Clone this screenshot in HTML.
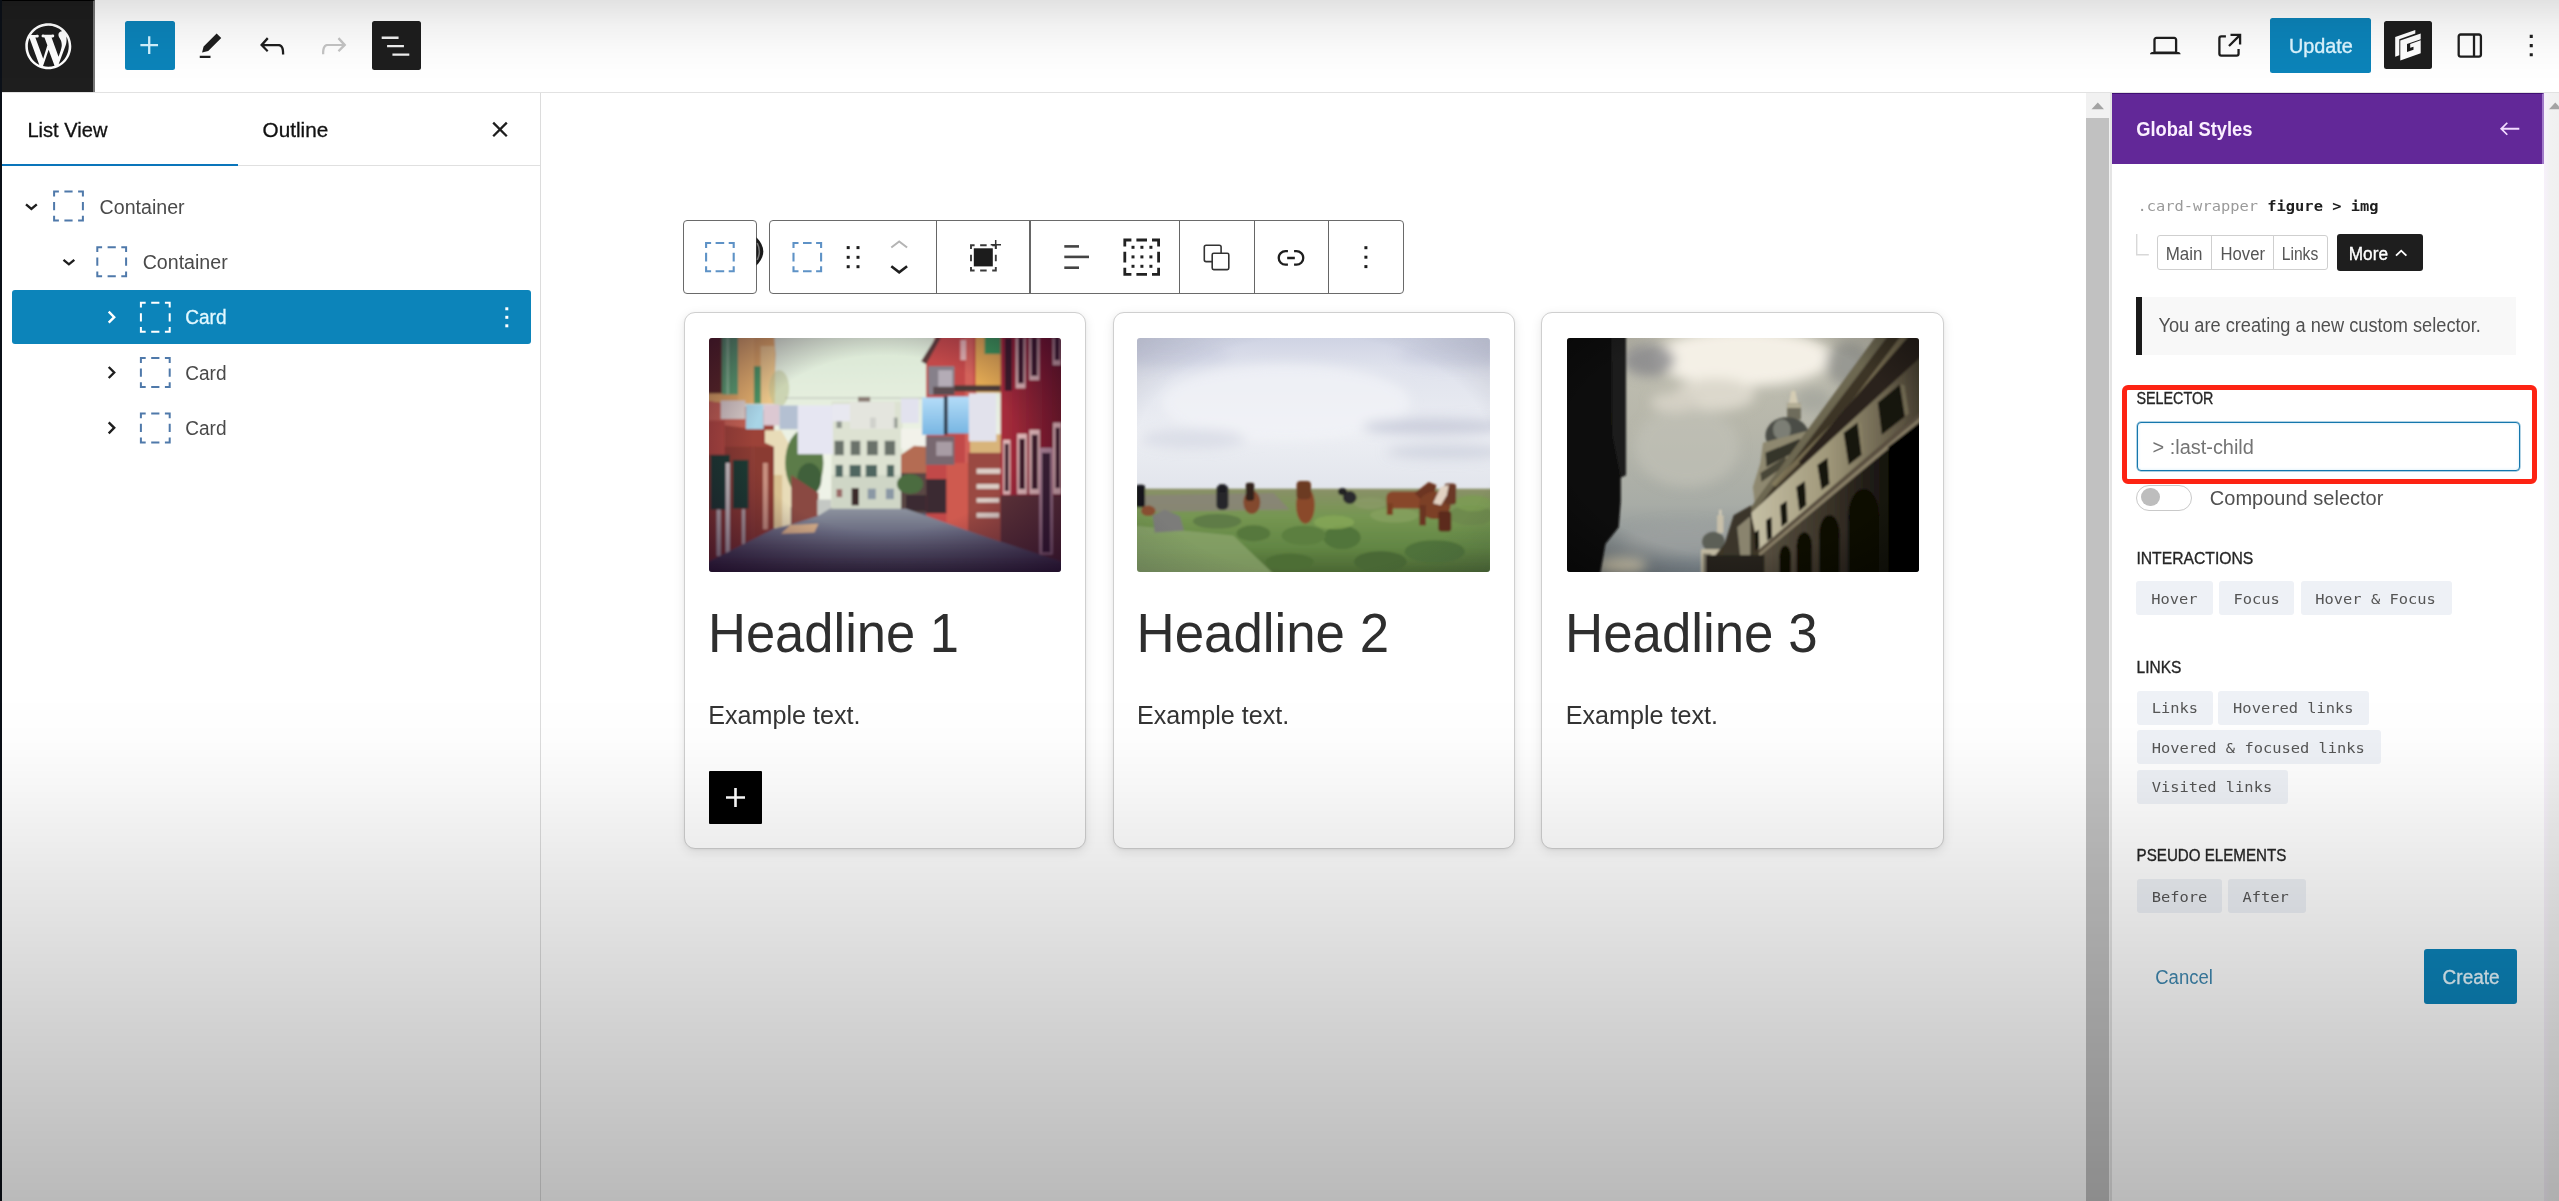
<!DOCTYPE html>
<html lang="en">
<head>
<meta charset="utf-8">
<title>Edit Page — WordPress</title>
<style>
html,body{margin:0;padding:0}
html{width:2559px;height:1201px;overflow:hidden}
body{width:2559px;height:1201px;overflow:hidden;background:#fff;position:relative;font-family:"Liberation Sans",sans-serif;color:#1e1e1e}
.abs,body>*>div,body>*>svg{position:absolute}
#edge{left:0;top:0;width:2px;height:1201px;background:#0b1018;position:absolute}
/* header */
#hdr-bg{left:2px;top:0;width:2557px;height:92px;background:#fff;border-bottom:1px solid #e2e2e2}
#wp{left:2px;top:0;width:91px;height:92px;background:#1e1e1e;border-right:2px solid #777;border-top:1px solid #000;box-sizing:content-box;height:91px}
.btn{border-radius:2.5px}
#add{left:125px;top:21px;width:49.5px;height:49px;background:#0c84ba}
#lv{left:371.5px;top:21px;width:49px;height:48.5px;background:#1e1e1e}
#upd{left:2269.5px;top:18px;width:101.5px;height:54.5px;background:#0c84ba}
#gb{left:2384.3px;top:21px;width:47.7px;height:48.2px;background:#1e1e1e}
/* list view */
#lvp{left:2px;top:93px;width:538px;height:1108px;background:#fff;border-right:1px solid #dcdcdc}
#tabline{left:2px;top:164.5px;width:538px;height:1px;background:#e0e0e0}
#tabact{left:2px;top:163.5px;width:236px;height:2.5px;background:#0a75bb}
#sel{left:12px;top:289.7px;width:518.5px;height:54.8px;background:#0c84ba;border-radius:3px}
/* canvas */
#cv{left:541px;top:93px;width:1545px;height:1108px;background:#fff}
#sb1{left:2086px;top:93px;width:24px;height:1108px;background:#f1f1f1}
#sb1t{left:2086.2px;top:118.3px;width:22.6px;height:1083px;background:#c1c1c1}
#sbgap{left:2110px;top:93px;width:2px;height:1108px;background:#e4e4e4}
.tb{border:1.3px solid #6a6a6a;border-radius:4px;background:#fff;box-sizing:border-box}
#tb1{left:682.6px;top:219.9px;width:74.4px;height:74px}
#tb2{left:768.8px;top:219.9px;width:635.6px;height:74px}
.dv{width:1.3px;height:72px;top:221px;background:#666}
.card{top:312px;width:402.5px;height:537px;box-sizing:border-box;border:1.3px solid #cfcfcf;border-radius:11px;background:#fff;box-shadow:0 3px 12px rgba(0,0,0,.09),0 1px 3px rgba(0,0,0,.05)}
#appender{left:709.3px;top:770.7px;width:52.4px;height:53.5px;background:#000;border-radius:1px}
/* sidebar */
#sd{left:2112px;top:93px;width:431px;height:1108px;background:#fff}
#sdh{left:2112px;top:93px;width:429.5px;height:71.2px;background:#622898;border-top:1px solid #3f0f72;box-sizing:border-box;border-right:2px solid #a27bc9;width:431.5px}
#sb2{left:2543.5px;top:93px;width:15.5px;height:1108px;background:linear-gradient(90deg,#f7f0fb,#f1f1f1 40%,#f0f0f0)}
.seg{top:234.5px;height:35.8px;box-sizing:border-box;border:1.2px solid #cfcfcf;background:#fff}
#more{left:2336.7px;top:234.2px;width:86.6px;height:36.6px;background:#1e1e1e;border-radius:3px}
#ntc{left:2136.4px;top:296.5px;width:380px;height:58.5px;background:#f8f8f8;border-left:6.5px solid #1a1a1a;box-sizing:border-box}
#inp{left:2137px;top:421.5px;width:383px;height:49.7px;box-sizing:border-box;border:1.7px solid #1577ad;border-radius:4px;background:#fff;box-shadow:0 0 0 .7px rgba(21,119,173,.45),inset 0 0 3px rgba(120,200,240,.35)}
#red{left:2122px;top:385px;width:415px;height:98.8px;box-sizing:border-box;border:5px solid #fd2313;border-radius:6px}
#tog{left:2136.4px;top:484.7px;width:55.2px;height:26.2px;box-sizing:border-box;border:1.3px solid #c9c9c9;border-radius:14px;background:#fff}
#knob{left:2141.2px;top:487.5px;width:18.4px;height:18.4px;border-radius:50%;background:#bdbdbd}
.tag{height:33.9px;background:#eef1f6;border-radius:3px}
#create{left:2423.7px;top:949.4px;width:93.3px;height:54.5px;background:#0c84ba;border-radius:3px}
/* overlay */
#ov{left:0;top:0;width:2559px;height:1201px;position:absolute;pointer-events:none;
background:linear-gradient(180deg,rgba(0,0,0,.115) 0px,rgba(0,0,0,.085) 12px,rgba(0,0,0,.055) 25px,rgba(0,0,0,.02) 50px,rgba(0,0,0,.005) 72px,rgba(0,0,0,0) 85px,rgba(0,0,0,0) 690px,rgba(0,0,0,.008) 740px,rgba(0,0,0,.04) 795px,rgba(0,0,0,.086) 870px,rgba(0,0,0,.176) 1025px,rgba(0,0,0,.27) 1201px)}
svg text{font-family:"Liberation Sans",sans-serif}
svg .m{font-family:"DejaVu Sans Mono","Liberation Mono",monospace}
</style>
</head>
<body>
<div id="edge"></div>
<header>
<div id="hdr-bg"></div>
<div id="wp"></div>
<div id="add" class="btn"></div>
<div id="lv" class="btn"></div>
<div id="upd" class="btn"></div>
<div id="gb" class="btn"></div>
</header>
<aside>
<div id="lvp"></div>
<div id="tabline"></div>
<div id="tabact"></div>
<div id="sel"></div>
</aside>
<main>
<div id="cv"></div>
<div id="tb1" class="tb"></div>
<div id="tb2" class="tb"></div>
<div class="dv" style="left:936px"></div>
<div class="dv" style="left:1029.3px"></div>
<div class="dv" style="left:1178.7px"></div>
<div class="dv" style="left:1253.5px"></div>
<div class="dv" style="left:1328.1px"></div>
<div class="card" style="left:683.75px"></div>
<div class="card" style="left:1112.5px"></div>
<div class="card" style="left:1541.25px"></div>
<div id="appender"></div>
<div id="sb1"></div>
<div id="sb1t"></div>
<div id="sbgap"></div>
</main>
<section>
<div id="sd"></div>
<div id="sdh"></div>
<div id="sb2"></div>
<div class="seg" style="left:2156.8px;width:55.3px;border-radius:3px 0 0 3px"></div>
<div class="seg" style="left:2211px;width:62.8px"></div>
<div class="seg" style="left:2272.7px;width:55px;border-radius:0 3px 3px 0"></div>
<div id="more"></div>
<div id="ntc"></div>
<div id="inp"></div>
<div id="red"></div>
<div id="tog"></div>
<div id="knob"></div>
<div class="tag" style="left:2136.4px;top:581.3px;width:76.4px"></div>
<div class="tag" style="left:2218.5px;top:581.3px;width:75.8px"></div>
<div class="tag" style="left:2301px;top:581.3px;width:150.7px"></div>
<div class="tag" style="left:2136.6px;top:691px;width:76.3px"></div>
<div class="tag" style="left:2218.1px;top:691px;width:151.1px"></div>
<div class="tag" style="left:2136.6px;top:730.1px;width:244.1px"></div>
<div class="tag" style="left:2136.6px;top:769.7px;width:151.4px"></div>
<div class="tag" style="left:2136.6px;top:878.7px;width:85px"></div>
<div class="tag" style="left:2227.9px;top:878.7px;width:78px"></div>
<div id="create"></div>
</section>
<figure style="margin:0">
<!-- photo 1: street with laundry -->
<svg width="352" height="234" viewBox="0 0 352 234" style="left:709.3px;top:338px;position:absolute;border-radius:3px;overflow:hidden">
<defs>
<filter id="b1" x="-5%" y="-5%" width="110%" height="110%"><feGaussianBlur stdDeviation="1.1"/></filter>
<linearGradient id="p1sky" x1="0" y1="0" x2="0" y2="1"><stop offset="0" stop-color="#d9e7d4"/><stop offset=".5" stop-color="#eff4e7"/><stop offset="1" stop-color="#eef0e6"/></linearGradient>
<linearGradient id="p1st" x1="0" y1="0" x2="0" y2="1"><stop offset="0" stop-color="#8c929e"/><stop offset=".35" stop-color="#696a80"/><stop offset=".7" stop-color="#4a465c"/><stop offset="1" stop-color="#2a2236"/></linearGradient>
<linearGradient id="p1rd" x1="0" y1="0" x2="1" y2="0"><stop offset="0" stop-color="#a82c3c"/><stop offset="1" stop-color="#701828"/></linearGradient>
<linearGradient id="p1bl" x1="0" y1="0" x2="0" y2="1"><stop offset="0" stop-color="#b4dcf8"/><stop offset="1" stop-color="#78b6e2"/></linearGradient>
<radialGradient id="p1v" cx=".5" cy=".45" r=".75"><stop offset=".5" stop-color="#180020" stop-opacity="0"/><stop offset="1" stop-color="#180020" stop-opacity=".68"/></radialGradient>
</defs>
<g filter="url(#b1)"><g transform="scale(.20145) translate(-22 -20)">
<rect x="0" y="0" width="1800" height="1210" fill="url(#p1sky)"/>
<rect x="0" y="860" width="1800" height="350" fill="#5a5870"/>
<!-- center building -->
<rect x="630" y="335" width="352" height="540" fill="#dde2d2"/>
<rect x="630" y="700" width="352" height="175" fill="#cfd6c6"/>
<rect x="762" y="312" width="60" height="24" fill="#8a7a72"/>
<g fill="#6b726a"><rect x="645" y="530" width="46" height="72"/><rect x="725" y="530" width="48" height="72"/><rect x="806" y="530" width="54" height="72"/><rect x="894" y="530" width="52" height="72"/></g>
<g fill="#4f6660"><rect x="650" y="650" width="36" height="60"/><rect x="720" y="650" width="56" height="60"/><rect x="800" y="650" width="56" height="60"/><rect x="905" y="650" width="36" height="60"/></g>
<g fill="#8a98a4"><rect x="810" y="768" width="40" height="52"/><rect x="900" y="768" width="40" height="52"/><rect x="655" y="770" width="28" height="40" fill="#9a6a68"/></g>
<rect x="730" y="765" width="36" height="86" fill="#3a2a2a"/>
<g fill="#8e948c"><rect x="655" y="415" width="26" height="52"/><rect x="822" y="415" width="28" height="52"/><rect x="935" y="415" width="22" height="52"/></g>
<!-- far right-center -->
<rect x="975" y="470" width="130" height="100" fill="#f2f2ea"/>
<polygon points="975,600 1040,555 1110,560 1110,700 975,700" fill="#b46c52"/>
<rect x="975" y="690" width="130" height="200" fill="#5a4644"/>
<ellipse cx="1020" cy="745" rx="65" ry="50" fill="#4c6c40"/>
<rect x="1000" y="800" width="100" height="80" fill="#3a2c30"/>
<!-- left building -->
<polygon points="0,0 345,0 352,100 345,345 0,345" fill="#dca664"/>
<rect x="165" y="0" width="82" height="345" fill="#e4b06c"/>
<rect x="278" y="60" width="70" height="285" fill="#e8c488"/>
<rect x="0" y="0" width="86" height="295" fill="#5c2a28"/>
<rect x="86" y="0" width="80" height="300" fill="#5ca472"/>
<rect x="108" y="0" width="14" height="300" fill="#8cc49a"/>
<rect x="245" y="160" width="34" height="185" fill="#4c9464"/>
<polygon points="0,330 345,385 345,968 0,1140" fill="#9c4238"/>
<polygon points="0,560 345,560 345,968 0,1140" fill="#7c342e" opacity=".55"/>
<polygon points="0,330 230,365 230,470 0,440" fill="#c46252"/>
<rect x="0" y="430" width="100" height="170" fill="#b04a40"/>
<polygon points="300,478 380,478 428,560 428,952 345,975 345,560 300,540" fill="#e8dcb8"/>
<rect x="345" y="700" width="40" height="260" fill="#d8c090"/>
<rect x="30" y="600" width="96" height="272" fill="#1c3a30"/>
<rect x="140" y="625" width="78" height="242" fill="#1c3a30"/>
<rect x="105" y="640" width="20" height="455" fill="#d4cccc"/>
<rect x="60" y="872" width="20" height="230" fill="#c8c0c0"/>
<rect x="185" y="870" width="16" height="175" fill="#b8a8a8"/>
<rect x="225" y="560" width="30" height="460" fill="#8c3c34"/>
<rect x="290" y="640" width="24" height="330" fill="#c89080"/>
<ellipse cx="495" cy="640" rx="95" ry="165" fill="#5c7c48"/>
<ellipse cx="520" cy="720" rx="60" ry="80" fill="#41603a"/>
<ellipse cx="370" cy="270" rx="50" ry="90" fill="#b8c090" opacity=".55"/>
<polygon points="430,700 565,790 565,905 430,948" fill="#8a4a42"/>
<rect x="560" y="822" width="68" height="80" fill="#c4c8c4"/>
<!-- right buildings -->
<polygon points="1150,0 1350,0 1350,995 1100,905 1100,130" fill="#c24a48"/>
<polygon points="1200,640 1315,640 1315,985 1200,940" fill="#cf5a50"/>
<rect x="1293" y="0" width="42" height="640" fill="#d2625a"/>
<polygon points="1075,135 1150,15 1175,15 1100,150" fill="#5a3a3a"/>
<rect x="1110" y="160" width="130" height="142" fill="#86808a"/>
<rect x="1160" y="180" width="70" height="84" fill="#b4acb6"/>
<rect x="1135" y="262" width="105" height="40" fill="#5a4c50"/>
<rect x="1270" y="30" width="28" height="100" fill="#e0b0b0"/>
<rect x="1098" y="508" width="142" height="142" fill="#786870"/>
<rect x="1150" y="535" width="80" height="70" fill="#a89ca4"/>
<rect x="1100" y="720" width="100" height="170" fill="#3a2a32"/>
<rect x="1345" y="0" width="128" height="292" fill="#e0a852"/>
<rect x="1390" y="0" width="80" height="100" fill="#3a9a5a"/>
<rect x="1240" y="255" width="230" height="30" fill="#4a3a38"/>
<rect x="1318" y="498" width="155" height="95" fill="#d8b47a"/>
<rect x="1308" y="590" width="165" height="450" fill="#9a4a42"/>
<g fill="#dccdc6"><rect x="1350" y="668" width="120" height="26"/><rect x="1350" y="745" width="112" height="24"/><rect x="1350" y="815" width="112" height="22"/><rect x="1350" y="888" width="112" height="24"/></g>
<rect x="1470" y="0" width="330" height="805" fill="url(#p1rd)"/>
<polygon points="1470,800 1800,800 1800,1140 1470,1032" fill="#5c3038"/>
<g fill="#e0b8b8"><rect x="1545" y="20" width="48" height="250"/><rect x="1612" y="20" width="50" height="210"/><rect x="1728" y="20" width="40" height="135"/><rect x="1482" y="525" width="36" height="272"/><rect x="1552" y="495" width="48" height="300"/><rect x="1612" y="475" width="52" height="320"/><rect x="1730" y="440" width="40" height="355"/></g>
<g fill="#3c1c2c"><rect x="1490" y="20" width="36" height="262"/><rect x="1556" y="20" width="28" height="225"/><rect x="1622" y="20" width="30" height="188"/><rect x="1738" y="20" width="24" height="110"/><rect x="1490" y="545" width="20" height="235"/><rect x="1562" y="520" width="28" height="250"/><rect x="1624" y="500" width="30" height="270"/><rect x="1742" y="465" width="22" height="300"/></g>
<rect x="1662" y="565" width="66" height="530" fill="#b0889a"/>
<rect x="1675" y="590" width="42" height="495" fill="#3a2234"/>
<!-- street -->
<polygon points="620,868 1000,868 1100,902 1350,992 1470,1032 1800,1140 1800,1210 0,1210 0,1140 345,966 430,946 565,902" fill="url(#p1st)"/>
<polygon points="425,948 565,942 545,985 380,992" fill="#e8b888" opacity=".85"/>
<!-- laundry -->
<rect x="400" y="316" width="700" height="4" fill="#8a8a8a" opacity=".6"/>
<rect x="80" y="330" width="122" height="92" fill="#d8ccc8"/>
<rect x="205" y="350" width="88" height="122" fill="#a8d4e6"/>
<rect x="292" y="350" width="80" height="104" fill="#dcc8d2"/>
<rect x="372" y="355" width="92" height="118" fill="#b4c0d2"/>
<rect x="462" y="355" width="175" height="242" fill="#e6e6f2"/>
<rect x="636" y="348" width="86" height="86" fill="#e8e8f0"/>
<rect x="722" y="338" width="222" height="134" fill="#e6e6e2" opacity=".75"/>
<rect x="975" y="320" width="88" height="122" fill="#e2e2ee"/>
<rect x="1080" y="315" width="112" height="186" fill="url(#p1bl)"/>
<rect x="1205" y="310" width="108" height="184" fill="url(#p1bl)"/>
<rect x="1188" y="308" width="18" height="192" fill="#2a3a4c"/>
<rect x="1312" y="295" width="136" height="238" fill="#e2e2ec"/>
</g></g>
<rect width="352" height="234" fill="url(#p1v)"/>
</svg>
</figure>
<figure style="margin:0">
<!-- photo 2: horses in field -->
<svg width="352.8" height="234" viewBox="0 0 352.8 234" style="left:1137px;top:338px;position:absolute;border-radius:3px;overflow:hidden">
<defs>
<filter id="b2" x="-5%" y="-5%" width="110%" height="110%"><feGaussianBlur stdDeviation="1.2"/></filter>
<filter id="b2b" x="-20%" y="-20%" width="140%" height="140%"><feGaussianBlur stdDeviation="28"/></filter>
<linearGradient id="p2sky" x1="0" y1="0" x2="0" y2="1"><stop offset="0" stop-color="#cdd1e2"/><stop offset=".22" stop-color="#e0e3ed"/><stop offset=".65" stop-color="#eceef3"/><stop offset="1" stop-color="#e2e5ec"/></linearGradient>
<linearGradient id="p2gr" x1="0" y1="0" x2="0" y2="1"><stop offset="0" stop-color="#8a9068"/><stop offset=".3" stop-color="#769652"/><stop offset=".65" stop-color="#628644"/><stop offset="1" stop-color="#445e2e"/></linearGradient>
<radialGradient id="p2v" cx=".5" cy=".5" r=".78"><stop offset=".65" stop-color="#1a1a30" stop-opacity="0"/><stop offset="1" stop-color="#1a1a30" stop-opacity=".2"/></radialGradient>
</defs>
<g transform="scale(.20145) translate(-22 -20)">
<rect x="0" y="0" width="1800" height="775" fill="url(#p2sky)"/>
<g filter="url(#b2b)">
<ellipse cx="760" cy="340" rx="620" ry="190" fill="#f2f3f7" opacity=".75"/>
<ellipse cx="1500" cy="460" rx="360" ry="42" fill="#c2c6d6" opacity=".75"/>
<ellipse cx="1560" cy="585" rx="300" ry="36" fill="#c8ccda" opacity=".7"/>
<ellipse cx="1620" cy="100" rx="300" ry="70" fill="#c2c6da" opacity=".45"/>
<ellipse cx="180" cy="100" rx="300" ry="70" fill="#c4c8dc" opacity=".45"/>
<ellipse cx="300" cy="520" rx="260" ry="50" fill="#d4d7e2" opacity=".7"/>
</g>
</g>
<g filter="url(#b2)"><g transform="scale(.20145) translate(-22 -20)">
<rect x="0" y="768" width="1800" height="450" fill="url(#p2gr)"/>
<polygon points="60,800 700,790 780,872 60,884" fill="#8a8478" opacity=".85"/>
<polygon points="0,950 500,1000 720,1210 0,1210" fill="#8ea670" opacity=".7"/>
<ellipse cx="1300" cy="900" rx="120" ry="36" fill="#86a05e" opacity=".8"/>
<ellipse cx="1040" cy="1010" rx="92" ry="58" fill="#51743a"/>
<ellipse cx="850" cy="1000" rx="110" ry="48" fill="#5b7f40"/>
<ellipse cx="600" cy="990" rx="84" ry="40" fill="#57783e"/>
<ellipse cx="1230" cy="1130" rx="130" ry="52" fill="#496834"/>
<ellipse cx="1500" cy="1080" rx="150" ry="56" fill="#50723a"/>
<ellipse cx="420" cy="930" rx="120" ry="36" fill="#5e7c46"/>
<ellipse cx="780" cy="1130" rx="120" ry="40" fill="#4e6e36"/>
<ellipse cx="1680" cy="900" rx="110" ry="50" fill="#6e8a4e"/>
<ellipse cx="1000" cy="935" rx="100" ry="34" fill="#86a856" opacity=".8"/>
<ellipse cx="1690" cy="840" rx="90" ry="40" fill="#7c9c52" opacity=".8"/>
<ellipse cx="1180" cy="840" rx="80" ry="30" fill="#8a9a66" opacity=".8"/>
<!-- horses -->
<rect x="16" y="748" width="46" height="112" rx="14" fill="#17171a"/>
<ellipse cx="78" cy="878" rx="36" ry="26" fill="#8a5030"/>
<polygon points="100,900 160,872 235,905 255,975 110,985" fill="#7c7c7a"/>
<rect x="416" y="750" width="60" height="122" rx="22" fill="#26262c"/>
<rect x="430" y="746" width="30" height="40" fill="#1c1c20"/>
<ellipse cx="592" cy="835" rx="42" ry="58" fill="#83492e"/>
<rect x="562" y="738" width="42" height="90" rx="12" fill="#33201a"/>
<ellipse cx="858" cy="850" rx="46" ry="92" fill="#8a4a2c"/>
<rect x="814" y="730" width="72" height="90" rx="20" fill="#6c3a24"/>
<ellipse cx="1078" cy="812" rx="34" ry="32" fill="#2c2c2e"/>
<ellipse cx="1042" cy="782" rx="22" ry="18" fill="#222224"/>
<rect x="1260" y="782" width="190" height="84" rx="30" fill="#88462a"/>
<rect x="1262" y="840" width="30" height="58" fill="#7a3e24"/>
<polygon points="1400,790 1470,735 1508,750 1500,790 1440,830" fill="#6c3420"/>
<ellipse cx="1500" cy="850" rx="78" ry="68" fill="#7c4028"/>
<rect x="1424" y="850" width="32" height="100" fill="#6a3420"/>
<rect x="1518" y="880" width="64" height="100" rx="12" fill="#5c2c1c"/>
<rect x="1548" y="742" width="58" height="104" rx="16" fill="#6a3826"/>
<polygon points="1492,840 1530,760 1570,750 1560,800 1530,850" fill="#e2d2c2"/>
</g></g>
<rect width="352.8" height="234" fill="url(#p2v)"/>
</svg>
</figure>
<figure style="margin:0">
<!-- photo 3: classical building with dome -->
<svg width="352" height="234" viewBox="0 0 352 234" style="left:1566.500px;top:338px;position:absolute;border-radius:3px;overflow:hidden">
<defs>
<filter id="b3" x="-5%" y="-5%" width="110%" height="110%"><feGaussianBlur stdDeviation="1"/></filter>
<filter id="b3b" x="-20%" y="-20%" width="140%" height="140%"><feGaussianBlur stdDeviation="30"/></filter>
<linearGradient id="p3sky" x1="0" y1="0" x2="0" y2="1"><stop offset="0" stop-color="#c2c0b2"/><stop offset=".4" stop-color="#b6b6aa"/><stop offset=".7" stop-color="#a8aca6"/><stop offset="1" stop-color="#78828a"/></linearGradient>
<linearGradient id="p3wall" gradientUnits="userSpaceOnUse" x1="950" y1="0" x2="1765" y2="0"><stop offset="0" stop-color="#c4bea4"/><stop offset=".45" stop-color="#a0987a"/><stop offset="1" stop-color="#4e4636"/></linearGradient>
<linearGradient id="p3arc" gradientUnits="userSpaceOnUse" x1="950" y1="0" x2="1700" y2="0"><stop offset="0" stop-color="#5a5242"/><stop offset=".5" stop-color="#3a3328"/><stop offset="1" stop-color="#0a0806"/></linearGradient>
<radialGradient id="p3v" cx=".48" cy=".45" r=".8"><stop offset=".6" stop-color="#000" stop-opacity="0"/><stop offset="1" stop-color="#000" stop-opacity=".55"/></radialGradient>
</defs>
<g transform="scale(.20145) translate(-25 -20)">
<rect x="0" y="0" width="1800" height="1210" fill="url(#p3sky)"/>
<g filter="url(#b3b)">
<ellipse cx="900" cy="120" rx="440" ry="140" fill="#f4f0e6"/>
<ellipse cx="620" cy="560" rx="260" ry="200" fill="#c0c0b6" opacity=".7"/>
<ellipse cx="760" cy="300" rx="200" ry="80" fill="#dcd8cc"/>
<ellipse cx="560" cy="340" rx="120" ry="50" fill="#d4d0c4"/>
<ellipse cx="430" cy="130" rx="130" ry="80" fill="#86868a" opacity=".8"/>
<ellipse cx="1420" cy="150" rx="110" ry="110" fill="#8e908c" opacity=".8"/>
<ellipse cx="1250" cy="330" rx="90" ry="60" fill="#9c9e98" opacity=".6"/>
<ellipse cx="290" cy="1150" rx="130" ry="40" fill="#dcd4ba"/>
<ellipse cx="600" cy="1020" rx="300" ry="80" fill="#a0a4a2" opacity=".6"/>
</g>
</g>
<g filter="url(#b3)"><g transform="scale(.20145) translate(-25 -20)">
<!-- left dark building -->
<polygon points="0,0 318,0 318,700 292,712 292,830 282,960 216,1042 186,1210 0,1210" fill="#0b0b0b"/>
<polygon points="245,0 318,0 318,700 292,712 250,500" fill="#1e1e1c"/>
<!-- big dome -->
<polygon points="1138,282 1158,282 1172,350 1126,350" fill="#d4ccb4"/>
<rect x="1118" y="345" width="68" height="80" fill="#6e6c5c"/>
<rect x="1118" y="345" width="68" height="22" fill="#b4ae96"/>
<ellipse cx="1118" cy="505" rx="108" ry="92" fill="#4c4e46"/>
<ellipse cx="1092" cy="475" rx="44" ry="52" fill="#7c7e74"/>
<polygon points="998,540 1220,480 1230,600 1170,660 960,870 948,760 985,640" fill="#8e8870"/>
<polygon points="1010,590 1180,520 1185,570 1015,660" fill="#36342a"/>
<polygon points="985,690 1110,610 1112,650 990,735" fill="#4a4638"/>
<!-- small dome -->
<rect x="780" y="872" width="12" height="36" fill="#d4ccb8"/>
<rect x="770" y="900" width="32" height="88" fill="#c8c0aa"/>
<ellipse cx="752" cy="1032" rx="56" ry="50" fill="#5c5e56"/>
<rect x="690" y="1068" width="128" height="150" fill="#c0b8a0"/>
<rect x="700" y="1090" width="40" height="110" fill="#7a7666"/>
<!-- right building silhouette / cornice wedge -->
<polygon points="1568,0 1800,0 1800,1210 715,1210 760,1100 808,1040" fill="#3c3528"/>
<polygon points="1568,0 1625,0 940,905 808,1040" fill="#767058" opacity=".85"/>
<polygon points="1690,0 1740,0 1420,400 1060,760 1040,745 1400,385" fill="#8e8462" opacity=".7"/>
<polygon points="1730,0 1800,0 1800,98 1200,650 1175,636" fill="#2a241a"/>
<!-- beige wall -->
<polygon points="1800,98 1800,368 978,1070 938,890" fill="url(#p3wall)"/>
<!-- string course -->
<polygon points="1800,368 1800,420 978,1106 978,1070" fill="#5a5040"/>
<polygon points="1800,395 1800,420 978,1106 978,1090" fill="#8a8068"/>
<!-- arcade -->
<polygon points="1800,420 1800,1210 978,1210 978,1106" fill="url(#p3arc)"/>
<g fill="#090705">
<ellipse cx="1498" cy="900" rx="76" ry="130"/><rect x="1422" y="900" width="152" height="320"/>
<ellipse cx="1328" cy="990" rx="50" ry="90"/><rect x="1278" y="990" width="100" height="230"/>
<ellipse cx="1203" cy="1050" rx="38" ry="66"/><rect x="1165" y="1050" width="76" height="170"/>
<ellipse cx="1108" cy="1100" rx="28" ry="50"/><rect x="1080" y="1100" width="56" height="120"/>
</g>
<polygon points="1620,560 1800,420 1800,1210 1620,1210" fill="#060504"/>
<!-- windows -->
<g fill="#17130f">
<polygon points="1568,340 1678,250 1703,410 1588,500"/>
<polygon points="1398,490 1468,440 1488,600 1423,650"/>
<polygon points="1268,650 1318,615 1328,745 1288,775"/>
<polygon points="1163,760 1206,730 1213,850 1178,880"/>
<polygon points="1083,850 1116,828 1120,935 1090,958"/>
<polygon points="1013,925 1040,908 1043,1010 1018,1028"/>
<polygon points="956,985 978,970 980,1060 960,1075"/>
</g>
<g fill="#8c8466" opacity=".55">
<polygon points="1468,440 1488,445 1500,590 1488,600"/>
<polygon points="1678,250 1700,255 1722,395 1703,410"/>
</g>
<!-- lower-left structures -->
<polygon points="808,1040 852,900 940,850 945,1110 800,1110" fill="#3a362c"/>
<polygon points="870,960 935,905 935,1100 885,1100" fill="#8a846e"/>
<rect x="715" y="1098" width="290" height="120" fill="#26231d"/>
</g></g>
<rect width="352" height="234" fill="url(#p3v)"/>
</svg>
</figure>
<svg id="fg" width="2559" height="1201" viewBox="0 0 2559 1201" style="left:0;top:0;position:absolute">
<defs>
<path id="ci" d="M0 0H30V30H0Z" fill="none"/>
</defs>
<!-- ===== header icons ===== -->
<g id="wplogo" transform="translate(25.3 23.3) scale(2.3)" fill="#fff">
<path d="M20 10c0-5.51-4.49-10-10-10C4.48 0 0 4.49 0 10c0 5.52 4.48 10 10 10 5.51 0 10-4.48 10-10zM7.78 15.37L4.37 6.22c.55-.02 1.17-.08 1.17-.08.5-.06.44-1.13-.06-1.11 0 0-1.45.11-2.37.11-.18 0-.37 0-.58-.01C4.12 2.69 6.87 1.11 10 1.11c2.33 0 4.45.87 6.05 2.34-.68-.11-1.65.39-1.65 1.58 0 .74.45 1.36.9 2.1.35.61.55 1.36.55 2.46 0 1.49-1.4 5-1.4 5l-3.03-8.37c.54-.02.82-.17.82-.17.5-.05.44-1.25-.06-1.22 0 0-1.44.12-2.38.12-.87 0-2.33-.12-2.33-.12-.5-.03-.56 1.2-.06 1.22l.92.08 1.26 3.41zM17.41 10c.24-.64.74-1.87.43-4.25.7 1.29 1.05 2.71 1.05 4.25 0 3.29-1.73 6.24-4.4 7.78.97-2.59 1.94-5.2 2.92-7.78zM6.1 18.09C3.12 16.65 1.11 13.53 1.11 10c0-1.3.23-2.48.72-3.59C3.25 10.3 4.67 14.2 6.1 18.09zm4.03-6.63l2.58 6.98c-.86.29-1.76.45-2.71.45-.79 0-1.57-.11-2.29-.33.81-2.38 1.62-4.74 2.42-7.1z"/>
</g>
<g transform="translate(131.2 27.1) scale(1.533)" fill="#d4f2ff"><path d="M11 12.5V17.5H12.5V12.5H17.5V11H12.5V6H11V11H6V12.5H11Z"/></g>
<g transform="translate(192.1 27.3) scale(1.533)" fill="#1e1e1e"><path d="m19 7-3-3-8.5 8.5-1 4 4-1L19 7Zm-7 11.5H5V20h7v-1.5Z"/></g>
<g transform="translate(253.9 27.4) scale(1.533)" fill="#1e1e1e"><path d="M18.3 11.7c-.6-.6-1.4-.9-2.3-.9H6.7l2.9-3.3-1.1-1-4.5 5L8.5 16l1-1-2.7-2.7H16c.5 0 .9.2 1.3.5 1 1 1 3.4 1 4.5v.3h1.5v-.2c0-1.5 0-4.3-1.5-5.7z"/></g>
<g transform="translate(315.4 27.4) scale(1.533)" fill="#c4c4c4"><path d="M15.6 6.5l-1.1 1 2.9 3.3H8c-.9 0-1.7.3-2.3.9-1.4 1.5-1.4 4.2-1.4 5.6v.2h1.5v-.3c0-1.1 0-3.5 1-4.5.3-.3.7-.5 1.3-.5h9.2L14.5 15l1.1 1.1 4.6-4.6-4.6-5z"/></g>
<g transform="translate(377.1 27.4) scale(1.533)" fill="#f0f0f0"><path d="M3 6h11v1.5H3V6Zm3.500 5.500h11V13h-11v-1.500ZM21 17H10v1.500h11V17Z"/></g>
<g transform="translate(2146.9 27.5) scale(1.533)" fill="#1e1e1e"><path d="M20.5 16h-.7V8c0-1.100-.9-2-2-2H6.200c-1.100 0-2 .9-2 2v8h-.7c-.8 0-1.500.7-1.500 1.500h20c0-.8-.7-1.500-1.500-1.500zM5.700 8c0-.3.2-.5.5-.5h11.600c.3 0 .5.2.5.5v7.600H5.700V8z"/></g>
<g transform="translate(2211.35 26.85) scale(1.533)" fill="#1e1e1e"><path d="M19.500 4.500h-7V6h4.440l-5.970 5.970 1.060 1.060L18 7.060v4.440h1.500v-7Zm-13 1a2 2 0 0 0-2 2v10a2 2 0 0 0 2 2h10a2 2 0 0 0 2-2v-3H17v3a.5.5 0 0 1-.5.5h-10a.5.5 0 0 1-.5-.5v-10a.5.5 0 0 1 .5-.5h3V5.500h-3Z"/></g>
<g transform="translate(2451.4 27.2) scale(1.533)" fill="#1e1e1e"><path d="M18 4H6c-1.100 0-2 .9-2 2v12c0 1.100.9 2 2 2h12c1.100 0 2-.9 2-2V6c0-1.100-.9-2-2-2zm-4 14.500H6c-.3 0-.5-.2-.5-.5V6c0-.3.2-.5.5-.5h8v13zm4.500-.5c0 .3-.2.5-.5.5h-2.500v-13H18c.3 0 .5.2.5.5v12z"/></g>
<g transform="translate(2512.85 27.2) scale(1.533)" fill="#1e1e1e"><path d="M13 19h-2v-2h2v2zm0-6h-2v-2h2v2zm0-6h-2V5h2v2z"/></g>
<!-- GenerateBlocks logo -->
<g fill="#fff">
<path d="M2395.200 37L2415.300 29.900V33.500L2399.300 39.200V55.300L2395.200 56.700Z"/>
<path d="M2400.300 40.500L2420.700 33.400V39.300L2407 44.100V52L2413.500 49.800V46.700L2410.200 47.800V43.900L2420.700 40.300V53.300L2400.300 60.400Z"/>
</g>
<text x="2288.900" y="53.400" font-size="20.500" textLength="64" lengthAdjust="spacingAndGlyphs" fill="#dcf5ff" stroke="#dcf5ff" stroke-width=".35">Update</text>

<!-- ===== list view ===== -->
<text x="27.400" y="137" font-size="20" textLength="80" lengthAdjust="spacingAndGlyphs" fill="#111" stroke="#111" stroke-width=".3">List View</text>
<text x="262.600" y="137" font-size="20" textLength="65.600" lengthAdjust="spacingAndGlyphs" fill="#111" stroke="#111" stroke-width=".3">Outline</text>
<path d="M493.200 122.600L506.800 136.200M506.800 122.600L493.200 136.200" stroke="#1e1e1e" stroke-width="2.300" fill="none"/>
<g fill="none" stroke="#1e1e1e" stroke-width="2.400">
<path d="M26 204.400L31.400 208.900L36.800 204.400"/>
<path d="M63.500 259.800L68.900 264.300L74.300 259.800"/>
<path d="M108.700 311.700L114.200 317.200L108.700 322.700" stroke="#fff"/>
<path d="M108.700 367L114.200 372.500L108.700 378"/>
<path d="M108.700 422.300L114.200 427.800L108.700 433.300"/>
</g>
<g fill="none" stroke-width="2">
<path d="M54.1 196.4V191.6H58.9M78.1 191.6H82.9V196.4M82.9 215.8V220.6H78.1M58.9 220.6H54.1V215.8M64.4 191.6H72.6M64.4 220.6H72.6M54.1 202V210.2M82.9 202V210.2" stroke="#4f79aa"/>
<path d="M97.3 252V247.2H102.1M121.3 247.2H126.1V252M126.1 271.4V276.2H121.3M102.1 276.2H97.3V271.4M107.6 247.2H115.8M107.6 276.2H115.8M97.3 257.6V265.8M126.1 257.6V265.8" stroke="#4f79aa"/>
<path d="M140.9 307.6V302.8H145.7M164.9 302.8H169.7V307.6M169.7 327V331.8H164.9M145.7 331.8H140.9V327M151.2 302.8H159.4M151.2 331.8H159.4M140.9 313.2V321.4M169.7 313.2V321.4" stroke="#fff"/>
<path d="M140.9 362.9V358.1H145.7M164.9 358.1H169.7V362.9M169.7 382.3V387.1H164.9M145.7 387.1H140.9V382.3M151.2 358.1H159.4M151.2 387.1H159.4M140.9 368.5V376.7M169.7 368.5V376.7" stroke="#4f79aa"/>
<path d="M140.9 418.2V413.4H145.7M164.9 413.4H169.7V418.2M169.7 437.6V442.4H164.9M145.7 442.4H140.9V437.6M151.2 413.4H159.4M151.2 442.4H159.4M140.9 423.8V432M169.7 423.8V432" stroke="#4f79aa"/>
</g>
<text x="99.600" y="213.600" font-size="20" textLength="85" lengthAdjust="spacingAndGlyphs" fill="#4a4a4a">Container</text>
<text x="142.700" y="268.900" font-size="20" textLength="85" lengthAdjust="spacingAndGlyphs" fill="#4a4a4a">Container</text>
<text x="185.200" y="324.300" font-size="20" textLength="41.300" lengthAdjust="spacingAndGlyphs" fill="#e2f8ff" stroke="#e2f8ff" stroke-width=".3">Card</text>
<text x="185.200" y="379.600" font-size="20" textLength="41.300" lengthAdjust="spacingAndGlyphs" fill="#4a4a4a">Card</text>
<text x="185.200" y="434.900" font-size="20" textLength="41.300" lengthAdjust="spacingAndGlyphs" fill="#4a4a4a">Card</text>
<g fill="#fff"><rect x="505.300" y="307.300" width="3" height="3"/><rect x="505.300" y="315.800" width="3" height="3"/><rect x="505.300" y="324.300" width="3" height="3"/></g>

<!-- ===== block toolbar ===== -->
<g fill="none" stroke-width="2.100" stroke="#5e92c6">
<path d="M706.1 248V243H711.1M728.7 243H733.7V248M733.7 266.3V271.3H728.7M711.1 271.3H706.1V266.3M715.6 243H724.2M715.6 271.3H724.2M706.1 252.85V261.45M733.7 252.85V261.45"/>
<path d="M793.5 248V243H798.5M816.1 243H821.1V248M821.1 266.3V271.3H816.1M798.5 271.3H793.5V266.3M803 243H811.6M803 271.3H811.6M793.5 252.85V261.45M821.1 252.85V261.45"/>
</g>
<path d="M756.400 237.200Q770.200 251.400 756.400 265.600Z" fill="#1a1a1a"/>
<path d="M757.200 243Q761.500 251.400 757.200 260" stroke="#777" stroke-width="1.600" fill="none"/>
<g fill="#1e1e1e">
<rect x="846.700" y="246.100" width="3" height="3"/><rect x="856.500" y="246.100" width="3" height="3"/>
<rect x="846.700" y="255.800" width="3" height="3"/><rect x="856.500" y="255.800" width="3" height="3"/>
<rect x="846.700" y="265.200" width="3" height="3"/><rect x="856.500" y="265.200" width="3" height="3"/>
</g>
<path d="M891.300 247.500L899.200 241.500L907.100 247.500" stroke="#b4b4b4" stroke-width="2" fill="none"/>
<path d="M891.300 266.300L899.200 272.400L907.100 266.300" stroke="#1e1e1e" stroke-width="2.600" fill="none"/>
<!-- insert-inner icon -->
<path d="M971 248.9V245.3H974.6M992.2 245.3H995.8V248.9M995.8 266.9V270.5H992.2M974.6 270.5H971V266.9M980.15 245.3H986.65M980.15 270.5H986.65M971 254.65V261.15M995.8 254.65V261.15" fill="none" stroke="#3a3a3a" stroke-width="1.900"/>
<rect x="973.800" y="248.300" width="19" height="18.100" fill="#1c1c1c"/>
<path d="M990.700 244.700H1001M995.700 240V249" stroke="#333" stroke-width="1.500" fill="none"/>
<!-- align -->
<g fill="#444"><rect x="1064.300" y="245.100" width="14.700" height="2.600"/><rect x="1064.300" y="255.600" width="24.700" height="2.600"/><rect x="1064.300" y="266.400" width="14.700" height="2.600"/></g>
<!-- grid -->
<path d="M1124.8 246.6V240H1131.4M1152 240H1158.6V246.6M1158.6 267.7V274.3H1152M1131.4 274.3H1124.8V267.7M1136.4 240H1147M1136.4 274.3H1147M1124.8 251.85V262.45M1158.6 251.85V262.45" fill="none" stroke="#222" stroke-width="2.800"/>
<g fill="#222">
<rect x="1131.500" y="245.800" width="3" height="3"/><rect x="1140.400" y="245.800" width="3" height="3"/><rect x="1149.400" y="245.800" width="3" height="3"/>
<rect x="1131.500" y="255.400" width="3" height="3"/><rect x="1140.400" y="255.400" width="3" height="3"/><rect x="1149.400" y="255.400" width="3" height="3"/>
<rect x="1131.500" y="264.800" width="3" height="3"/><rect x="1140.400" y="264.800" width="3" height="3"/><rect x="1149.400" y="264.800" width="3" height="3"/>
</g>
<!-- copy -->
<g fill="#fff" stroke="#333" stroke-width="1.600"><rect x="1204.300" y="245.300" width="16.800" height="16.300" rx="1.800"/><rect x="1212.200" y="253.200" width="16.600" height="16.400" rx="1.500"/></g>
<!-- link -->
<g transform="translate(1272.600 239.200) scale(1.533)" fill="#1e1e1e"><path d="M10 17.389H8.444A5.194 5.194 0 1 1 8.444 7H10v1.500H8.444a3.694 3.694 0 0 0 0 7.389H10v1.500ZM14 7h1.556a5.194 5.194 0 0 1 0 10.390H14v-1.500h1.556a3.694 3.694 0 0 0 0-7.390H14V7Zm-4.500 6h5v-1.500h-5V13Z"/></g>
<g fill="#1e1e1e"><rect x="1364.400" y="246.200" width="3" height="3"/><rect x="1364.400" y="255.700" width="3" height="3"/><rect x="1364.400" y="265.100" width="3" height="3"/></g>

<!-- ===== cards text ===== -->
<g font-size="56" fill="#2e2e2e">
<text x="708" y="652.300" textLength="251" lengthAdjust="spacingAndGlyphs">Headline 1</text>
<text x="1136.500" y="652.300" textLength="252.500" lengthAdjust="spacingAndGlyphs">Headline 2</text>
<text x="1565" y="652.300" textLength="252.500" lengthAdjust="spacingAndGlyphs">Headline 3</text>
</g>
<g font-size="25.500" fill="#333">
<text x="708.300" y="723.800" textLength="152.200" lengthAdjust="spacingAndGlyphs">Example text.</text>
<text x="1137" y="723.800" textLength="152.200" lengthAdjust="spacingAndGlyphs">Example text.</text>
<text x="1565.800" y="723.800" textLength="152.200" lengthAdjust="spacingAndGlyphs">Example text.</text>
</g>
<path d="M726 797.500H745M735.500 788V807" stroke="#fff" stroke-width="2.600" fill="none"/>

<!-- ===== scrollbar arrows ===== -->
<path d="M2091.500 109.300L2097.800 102.500L2104 109.300Z" fill="#a3a3a3"/>
<path d="M2549 109.300L2555.300 102.500L2561.500 109.300Z" fill="#a3a3a3"/>

<!-- ===== sidebar ===== -->
<text x="2136.250" y="136.250" font-size="20.500" font-weight="bold" textLength="116.250" lengthAdjust="spacingAndGlyphs" fill="#fbefff">Global Styles</text>
<g transform="translate(2495.300 114.350) scale(1.200)" fill="#f3dcff"><path d="M20 11.200H6.800l3.700-3.700-1-1L3.900 12l5.600 5.500 1-1-3.700-3.700H20z"/></g>
<text class="m" x="2137.500" y="210.750" font-size="14.200" fill="#9a9a9a" textLength="120.5" lengthAdjust="spacingAndGlyphs">.card-wrapper</text>
<text class="m" x="2267.300" y="210.750" font-size="14.200" font-weight="bold" fill="#1e1e1e" textLength="111.2" lengthAdjust="spacingAndGlyphs">figure &gt; img</text>
<path d="M2136.700 234V254.800H2148.800" stroke="#d8d8d8" stroke-width="1.400" fill="none"/>
<g font-size="17.500" fill="#555">
<text x="2165.750" y="260" textLength="36.750" lengthAdjust="spacingAndGlyphs">Main</text>
<text x="2220.500" y="260" textLength="44.500" lengthAdjust="spacingAndGlyphs">Hover</text>
<text x="2281.750" y="260" textLength="36.500" lengthAdjust="spacingAndGlyphs">Links</text>
</g>
<text x="2348.750" y="260" font-size="17.500" textLength="39.250" lengthAdjust="spacingAndGlyphs" fill="#fff" stroke="#fff" stroke-width=".35">More</text>
<path d="M2396 255.700L2401.200 250.700L2406.400 255.700" stroke="#fff" stroke-width="1.800" fill="none"/>
<text x="2158.500" y="331.600" font-size="19.500" textLength="322.300" lengthAdjust="spacingAndGlyphs" fill="#505050">You are creating a new custom selector.</text>
<g font-size="16.600" fill="#262626" stroke="#262626" stroke-width=".35">
<text x="2136.400" y="404.400" textLength="77" lengthAdjust="spacingAndGlyphs">SELECTOR</text>
<text x="2136.400" y="563.900" textLength="116.900" lengthAdjust="spacingAndGlyphs">INTERACTIONS</text>
<text x="2136.600" y="673.100" textLength="44.800" lengthAdjust="spacingAndGlyphs">LINKS</text>
<text x="2136.600" y="861.300" textLength="149.700" lengthAdjust="spacingAndGlyphs">PSEUDO ELEMENTS</text>
</g>
<text x="2152.500" y="453.900" font-size="20" textLength="101.400" lengthAdjust="spacingAndGlyphs" fill="#747474">&gt; :last-child</text>
<text x="2209.800" y="504.800" font-size="20" textLength="173.600" lengthAdjust="spacingAndGlyphs" fill="#505050">Compound selector</text>
<g class="m" font-size="14.200" fill="#555">
<text class="m" x="2151.300" y="604.300" textLength="46.3" lengthAdjust="spacingAndGlyphs">Hover</text>
<text class="m" x="2233.500" y="604.300" textLength="46.3" lengthAdjust="spacingAndGlyphs">Focus</text>
<text class="m" x="2315.300" y="604.300" textLength="120.5" lengthAdjust="spacingAndGlyphs">Hover &amp; Focus</text>
<text class="m" x="2151.700" y="712.700" textLength="46.3" lengthAdjust="spacingAndGlyphs">Links</text>
<text class="m" x="2233.100" y="712.700" textLength="120.5" lengthAdjust="spacingAndGlyphs">Hovered links</text>
<text class="m" x="2151.700" y="752.900" textLength="213.2" lengthAdjust="spacingAndGlyphs">Hovered &amp; focused links</text>
<text class="m" x="2151.700" y="792" textLength="120.5" lengthAdjust="spacingAndGlyphs">Visited links</text>
<text class="m" x="2151.700" y="901.500" textLength="55.6" lengthAdjust="spacingAndGlyphs">Before</text>
<text class="m" x="2242.600" y="901.500" textLength="46.3" lengthAdjust="spacingAndGlyphs">After</text>
</g>
<text x="2155.200" y="984.300" font-size="19.500" textLength="57.700" lengthAdjust="spacingAndGlyphs" fill="#3f88b0">Cancel</text>
<text x="2442.600" y="984.300" font-size="19.500" textLength="57" lengthAdjust="spacingAndGlyphs" fill="#e6f7ff" stroke="#e6f7ff" stroke-width=".3">Create</text>
</svg>
<div id="ov"></div>
</body>
</html>
